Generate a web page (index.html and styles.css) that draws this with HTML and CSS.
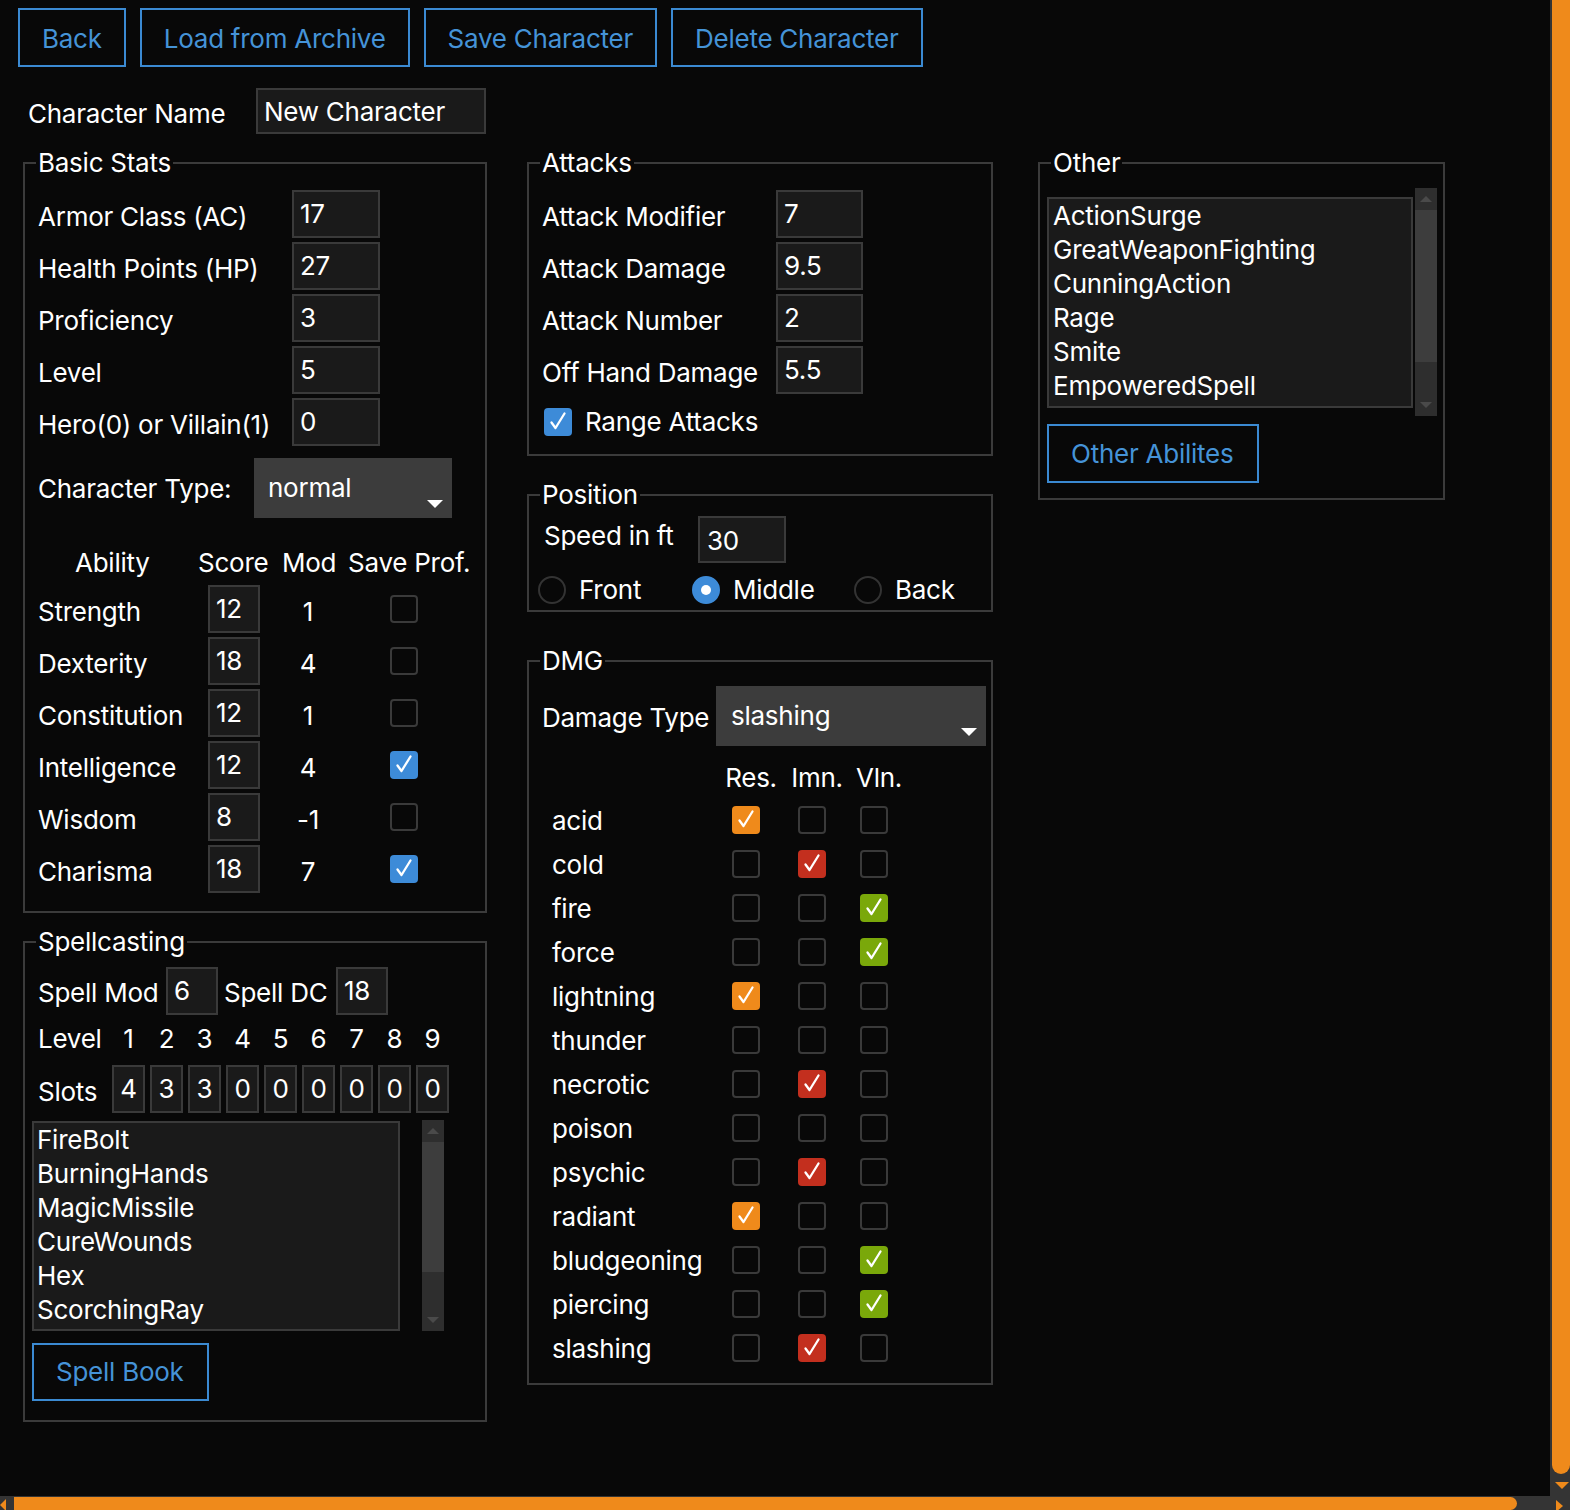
FILE: index.html
```html
<!DOCTYPE html>
<html lang="en">
<head>
<meta charset="utf-8">
<title>Character Editor</title>
<link rel="stylesheet" href="styles.css">
</head>
<body>
<div class="app">
  <main class="content">
    <div class="toolbar">
      <button class="btn">Back</button>
      <button class="btn">Load from Archive</button>
      <button class="btn">Save Character</button>
      <button class="btn">Delete Character</button>
    </div>
    <div class="name-row">
      <span class="name-label">Character Name</span>
      <div class="field name-field">New Character</div>
    </div>
    <div class="columns">
      <div class="col col1">
        <fieldset class="group">
          <legend>Basic Stats</legend>
          <div class="inner basic-inner">
            <div class="stats basic-stats">
              <span class="lbl">Armor Class (AC)</span><div class="field">17</div>
              <span class="lbl">Health Points (HP)</span><div class="field">27</div>
              <span class="lbl">Proficiency</span><div class="field">3</div>
              <span class="lbl">Level</span><div class="field">5</div>
              <span class="lbl">Hero(0) or Villain(1)</span><div class="field">0</div>
            </div>
            <div class="type-row">
              <span class="lbl-type">Character Type:</span>
              <div class="dropdown type-dd">normal<span class="caret"></span></div>
            </div>
            <div class="ability-grid ability-head">
              <span class="h-ability">Ability</span><span class="h-score">Score</span><span class="h-mod">Mod</span><span class="h-save">Save Prof.</span>
            </div>
            <div class="ability-grid ability-rows">
              <span class="lbl">Strength</span><div class="field score">12</div><span class="mod">1</span><span class="cb save"></span>
              <span class="lbl">Dexterity</span><div class="field score">18</div><span class="mod">4</span><span class="cb save"></span>
              <span class="lbl">Constitution</span><div class="field score">12</div><span class="mod">1</span><span class="cb save"></span>
              <span class="lbl">Intelligence</span><div class="field score">12</div><span class="mod">4</span><span class="cb save on blue"><svg viewBox="0 0 28 28"><path d="M7.5 14.5 L11.5 20 L20.5 5.5"/></svg></span>
              <span class="lbl">Wisdom</span><div class="field score">8</div><span class="mod">-1</span><span class="cb save"></span>
              <span class="lbl">Charisma</span><div class="field score">18</div><span class="mod">7</span><span class="cb save on blue"><svg viewBox="0 0 28 28"><path d="M7.5 14.5 L11.5 20 L20.5 5.5"/></svg></span>
            </div>
          </div>
        </fieldset>

        <fieldset class="group spell-group">
          <legend>Spellcasting</legend>
          <div class="inner spell-inner">
            <div class="spell-row">
              <span class="lbl-spell">Spell Mod</span>
              <div class="field small">6</div>
              <span class="lbl-spell dc">Spell DC</span>
              <div class="field small">18</div>
            </div>
            <div class="slot-grid level-row">
              <span>Level</span><span class="num">1</span><span class="num">2</span><span class="num">3</span><span class="num">4</span><span class="num">5</span><span class="num">6</span><span class="num">7</span><span class="num">8</span><span class="num">9</span>
            </div>
            <div class="slot-grid slots-row">
              <span class="slots-lbl">Slots</span>
              <div class="field slot">4</div><div class="field slot">3</div><div class="field slot">3</div><div class="field slot">0</div><div class="field slot">0</div><div class="field slot">0</div><div class="field slot">0</div><div class="field slot">0</div><div class="field slot">0</div>
            </div>
            <div class="list-row spell-list-row">
              <div class="listbox spell-list">
                <div>FireBolt</div>
                <div>BurningHands</div>
                <div>MagicMissile</div>
                <div>CureWounds</div>
                <div>Hex</div>
                <div>ScorchingRay</div>
              </div>
              <div class="lscroll spell-scroll">
                <div class="lcap"><span class="tri-up"></span></div>
                <div class="lthumb"></div>
                <div class="lrest"><span class="tri-dn"></span></div>
              </div>
            </div>
            <button class="btn spell-btn">Spell Book</button>
          </div>
        </fieldset>
      </div>

      <div class="col col2">
        <fieldset class="group">
          <legend>Attacks</legend>
          <div class="inner attack-inner">
            <div class="stats attack-stats">
              <span class="lbl">Attack Modifier</span><div class="field">7</div>
              <span class="lbl">Attack Damage</span><div class="field">9.5</div>
              <span class="lbl">Attack Number</span><div class="field">2</div>
              <span class="lbl">Off Hand Damage</span><div class="field">5.5</div>
              <div class="range-row"><span class="cb on blue"><svg viewBox="0 0 28 28"><path d="M7.5 14.5 L11.5 20 L20.5 5.5"/></svg></span><span>Range Attacks</span></div>
            </div>
          </div>
        </fieldset>

        <fieldset class="group pos-group">
          <legend>Position</legend>
          <div class="inner pos-inner">
            <div class="speed-row">
              <span class="lbl-speed">Speed in ft</span>
              <div class="field speed">30</div>
            </div>
            <div class="radio-row">
              <label class="radio-item front"><span class="radio"></span>Front</label>
              <label class="radio-item middle"><span class="radio sel"></span>Middle</label>
              <label class="radio-item back"><span class="radio"></span>Back</label>
            </div>
          </div>
        </fieldset>

        <fieldset class="group dmg-group">
          <legend>DMG</legend>
          <div class="inner dmg-inner">
            <div class="dtype-row">
              <span class="lbl-dtype">Damage Type</span>
              <div class="dropdown dtype-dd">slashing<span class="caret"></span></div>
            </div>
            <div class="dmg-grid dmg-head">
              <span></span><span class="hcell">Res.</span><span class="hcell">Imn.</span><span class="hcell">Vln.</span>
            </div>
            <div class="dmg-grid dmg-rows">
              <span class="dlbl">acid</span><span class="cb on orange"><svg viewBox="0 0 28 28"><path d="M7.5 14.5 L11.5 20 L20.5 5.5"/></svg></span><span class="cb"></span><span class="cb"></span>
              <span class="dlbl">cold</span><span class="cb"></span><span class="cb on red"><svg viewBox="0 0 28 28"><path d="M7.5 14.5 L11.5 20 L20.5 5.5"/></svg></span><span class="cb"></span>
              <span class="dlbl">fire</span><span class="cb"></span><span class="cb"></span><span class="cb on green"><svg viewBox="0 0 28 28"><path d="M7.5 14.5 L11.5 20 L20.5 5.5"/></svg></span>
              <span class="dlbl">force</span><span class="cb"></span><span class="cb"></span><span class="cb on green"><svg viewBox="0 0 28 28"><path d="M7.5 14.5 L11.5 20 L20.5 5.5"/></svg></span>
              <span class="dlbl">lightning</span><span class="cb on orange"><svg viewBox="0 0 28 28"><path d="M7.5 14.5 L11.5 20 L20.5 5.5"/></svg></span><span class="cb"></span><span class="cb"></span>
              <span class="dlbl">thunder</span><span class="cb"></span><span class="cb"></span><span class="cb"></span>
              <span class="dlbl">necrotic</span><span class="cb"></span><span class="cb on red"><svg viewBox="0 0 28 28"><path d="M7.5 14.5 L11.5 20 L20.5 5.5"/></svg></span><span class="cb"></span>
              <span class="dlbl">poison</span><span class="cb"></span><span class="cb"></span><span class="cb"></span>
              <span class="dlbl">psychic</span><span class="cb"></span><span class="cb on red"><svg viewBox="0 0 28 28"><path d="M7.5 14.5 L11.5 20 L20.5 5.5"/></svg></span><span class="cb"></span>
              <span class="dlbl">radiant</span><span class="cb on orange"><svg viewBox="0 0 28 28"><path d="M7.5 14.5 L11.5 20 L20.5 5.5"/></svg></span><span class="cb"></span><span class="cb"></span>
              <span class="dlbl">bludgeoning</span><span class="cb"></span><span class="cb"></span><span class="cb on green"><svg viewBox="0 0 28 28"><path d="M7.5 14.5 L11.5 20 L20.5 5.5"/></svg></span>
              <span class="dlbl">piercing</span><span class="cb"></span><span class="cb"></span><span class="cb on green"><svg viewBox="0 0 28 28"><path d="M7.5 14.5 L11.5 20 L20.5 5.5"/></svg></span>
              <span class="dlbl">slashing</span><span class="cb"></span><span class="cb on red"><svg viewBox="0 0 28 28"><path d="M7.5 14.5 L11.5 20 L20.5 5.5"/></svg></span><span class="cb"></span>
            </div>
          </div>
        </fieldset>
      </div>

      <div class="col col3">
        <fieldset class="group">
          <legend>Other</legend>
          <div class="inner other-inner">
            <div class="list-row other-list-row">
              <div class="listbox other-list">
                <div>ActionSurge</div>
                <div>GreatWeaponFighting</div>
                <div>CunningAction</div>
                <div>Rage</div>
                <div>Smite</div>
                <div>EmpoweredSpell</div>
              </div>
              <div class="lscroll other-scroll">
                <div class="lcap"><span class="tri-up"></span></div>
                <div class="lthumb"></div>
                <div class="lrest"><span class="tri-dn"></span></div>
              </div>
            </div>
            <button class="btn other-btn">Other Abilites</button>
          </div>
        </fieldset>
      </div>
    </div>
  </main>

  <div class="vscroll">
    <div class="vthumb"></div>
    <span class="vtri-dn"></span>
  </div>
  <div class="hscroll">
    <span class="htri-left"></span>
    <div class="hthumb"></div>
  </div>
  <div class="corner"><span class="ctri"></span></div>
</div>
</body>
</html>
```

FILE: styles.css
```css
* { box-sizing: border-box; }
html, body { margin: 0; padding: 0; }
body {
  background: #080808;
  color: #ffffff;
  font-family: Inter, "Noto Sans", "Liberation Sans", sans-serif;
  font-size: 26px;
  line-height: 30px;
  letter-spacing: -0.25px;
  overflow: hidden;
}
.app {
  display: grid;
  grid-template-columns: 1550px 20px;
  grid-template-rows: 1496px 14px;
  width: 1570px;
  height: 1510px;
}
.content { overflow: hidden; }

/* buttons */
.btn {
  font: inherit;
  letter-spacing: inherit;
  line-height: 30px;
  margin: 0;
  background: transparent;
  color: #4593d7;
  border: 2px solid #3b8ad2;
  border-radius: 0;
  padding: 0 22px;
  height: 59px;
  display: flex;
  align-items: center;
  white-space: nowrap;
}
.toolbar { display: flex; gap: 14px; padding: 8px 0 0 18px; }
.toolbar .btn { padding-top: 2px; }

/* inputs */
.field {
  height: 48px;
  background: #1a1a1a;
  border: 2px solid #3a3a3a;
  padding-left: 6px;
  display: flex;
  align-items: center;
  white-space: nowrap;
}
.name-row { display: flex; align-items: center; margin-top: 21px; padding-left: 28px; }
.name-label { width: 228px; padding-top: 6px; }
.name-field { width: 230px; height: 46px; padding-top: 1px; }

.columns { display: flex; align-items: flex-start; margin-top: 14px; }
.col { display: flex; flex-direction: column; }
.col1 { width: 464px; margin-left: 23px; }
.col2 { width: 466px; margin-left: 40px; }
.col3 { width: 407px; margin-left: 45px; }

fieldset.group {
  border: 2px solid #3b3b3b;
  margin: 0;
  padding: 0;
  min-width: 0;
}
legend {
  margin-left: 11px;
  padding: 0 2px;
  line-height: 30px;
  font-size: 26px;
}
.inner { padding-left: 13px; }

/* label/value grids */
.stats { display: grid; grid-auto-rows: 48px; row-gap: 4px; align-items: center; }
.basic-stats { grid-template-columns: 254px 88px; }
.attack-stats { grid-template-columns: 234px 87px; }
.lbl { padding-top: 6px; white-space: nowrap; }

.basic-inner { padding-top: 12px; padding-bottom: 18px; }
.type-row { display: grid; grid-template-columns: 216px 198px; align-items: center; margin-top: 12px; height: 60px; }
.lbl-type { padding-top: 2px; }
.dropdown {
  position: relative;
  height: 60px;
  background: #3c3c3c;
  display: flex;
  align-items: center;
  padding-left: 14px;
}
.caret {
  position: absolute;
  right: 9px;
  bottom: 10px;
  width: 0; height: 0;
  border-left: 8px solid transparent;
  border-right: 8px solid transparent;
  border-top: 8px solid #ffffff;
}

.ability-grid { display: grid; grid-template-columns: 160px 76px 68px 1fr; align-items: center; }
.ability-head { margin-top: 30px; height: 30px; white-space: nowrap; }
.h-ability { padding-left: 37px; }
.h-mod { padding-left: 8px; }
.h-save { padding-left: 6px; }
.ability-rows { margin-top: 7px; grid-auto-rows: 48px; row-gap: 4px; }
.field.score { width: 52px; margin-left: 10px; }
.mod { justify-self: center; padding-top: 6px; }
.cb.save { margin-left: 48px; }

/* checkboxes */
.cb {
  width: 28px;
  height: 28px;
  border: 2px solid #3a3a3a;
  border-radius: 4px;
  display: inline-flex;
  align-items: center;
  justify-content: center;
  flex: none;
}
.cb svg { width: 28px; height: 28px; flex: none; margin: -2px; }
.cb svg path { fill: none; stroke: #ffffff; stroke-width: 2.3; stroke-linejoin: round; stroke-linecap: round; }
.cb.on { border: none; }
.cb.on svg { margin: 0; }
.cb.blue { background: #3d8bd8; }
.cb.orange { background: #ef8a1b; }
.cb.red { background: #c32f1e; }
.cb.green { background: #7aa80a; }

/* spellcasting */
fieldset.spell-group { margin-top: 14px; }
.spell-inner { padding-top: 10px; padding-bottom: 19px; }
.spell-row { display: flex; align-items: center; height: 48px; }
.lbl-spell { width: 128px; padding-top: 4px; white-space: nowrap; }
.lbl-spell.dc { width: 112px; margin-left: 6px; }
.field.small { width: 52px; }
.slot-grid { display: grid; grid-template-columns: 69px repeat(9, 33px); column-gap: 5px; align-items: center; }
.level-row { margin-top: 9px; height: 30px; }
.num { text-align: center; }
.slots-row { margin-top: 11px; height: 48px; }
.slots-lbl { padding-top: 6px; }
.field.slot { width: 33px; padding: 0; justify-content: center; }

.list-row { display: flex; align-items: center; }
.listbox {
  background: #1a1a1a;
  border: 2px solid #3a3a3a;
  line-height: 34px;
  white-space: nowrap;
  overflow: hidden;
}
.spell-list-row { margin-top: 7px; margin-left: -6px; }
.spell-list { width: 368px; height: 210px; padding-left: 3px; }
.spell-scroll { margin-left: 22px; height: 211px; }
.spell-scroll .lthumb { height: 130px; }
.spell-btn { margin-top: 12px; margin-left: -6px; height: 58px; width: 177px; }

.lscroll { width: 22px; background: #2e2e2e; display: flex; flex-direction: column; }
.lcap { height: 22px; display: flex; align-items: center; justify-content: center; }
.lthumb { background: #3d3d3d; }
.lrest { flex: 1; display: flex; align-items: flex-end; justify-content: center; padding-bottom: 8px; }
.tri-up { width: 0; height: 0; border-left: 6px solid transparent; border-right: 6px solid transparent; border-bottom: 6px solid #4a4a4a; }
.tri-dn { width: 0; height: 0; border-left: 6px solid transparent; border-right: 6px solid transparent; border-top: 6px solid #4a4a4a; }

/* attacks */
.attack-inner { padding-top: 12px; padding-bottom: 8px; }
.range-row { grid-column: 1 / span 2; display: flex; align-items: center; gap: 13px; margin-left: 2px; }

/* position */
fieldset.pos-group { margin-top: 24px; }
.pos-inner { padding-top: 6px; padding-bottom: 6px; }
.speed-row { display: flex; align-items: center; margin-left: 2px; height: 47px; }
.lbl-speed { width: 154px; padding-bottom: 7px; }
.field.speed { width: 88px; height: 47px; padding-left: 7px; padding-top: 2px; }
.radio-row { display: flex; align-items: center; margin-top: 13px; height: 28px; margin-left: -4px; }
.radio-item { display: flex; align-items: center; gap: 13px; }
.radio-item.front { width: 154px; }
.radio-item.middle { width: 162px; }
.radio {
  width: 28px; height: 28px;
  border-radius: 50%;
  border: 2px solid #333333;
  display: flex; align-items: center; justify-content: center;
}
.radio.sel { background: #3d8bd8; border-color: #3d8bd8; }
.radio.sel::after { content: ""; width: 10px; height: 10px; border-radius: 50%; background: #ffffff; }

/* dmg */
fieldset.dmg-group { margin-top: 34px; }
.dmg-inner { padding-top: 10px; padding-bottom: 13px; }
.dtype-row { display: flex; align-items: center; height: 60px; }
.lbl-dtype { width: 174px; padding-top: 4px; white-space: nowrap; }
.dtype-dd { width: 270px; padding-left: 15px; }
.dmg-grid { display: grid; grid-template-columns: 190px 28px 38px 28px 34px 28px; align-items: center; }
.dmg-head { margin-top: 17px; height: 30px; }
.dmg-head .hcell { display: flex; justify-content: center; padding-left: 10px; white-space: nowrap; }
.dmg-head span:nth-child(3) { grid-column: 4; }
.dmg-head span:nth-child(4) { grid-column: 6; }
.dmg-rows { margin-top: 5px; grid-auto-rows: 44px; }
.dmg-rows .cb:nth-child(4n+2) { grid-column: 2; }
.dmg-rows .cb:nth-child(4n+3) { grid-column: 4; }
.dmg-rows .cb:nth-child(4n+4) { grid-column: 6; }
.dmg-rows .dlbl { grid-column: 1; padding-left: 10px; padding-top: 2px; }

/* other */
.other-inner { padding-top: 10px; padding-left: 7px; padding-bottom: 15px; }
.other-list { width: 366px; height: 211px; padding-left: 4px; }
.other-scroll { margin-left: 2px; height: 228px; }
.other-scroll .lthumb { height: 152px; }
.other-btn { margin-top: 8px; width: 212px; }

/* window scrollbars */
.vscroll { background: #343434; position: relative; }
.vthumb { position: absolute; left: 2px; right: 0; top: 0; height: 1474px; background: #ef8a1b; border-radius: 0 0 9px 9px; }
.vtri-dn { position: absolute; left: 5px; top: 1482px; width: 0; height: 0; border-left: 7px solid transparent; border-right: 7px solid transparent; border-top: 7px solid #ef8a1b; }
.hscroll { background: #343434; position: relative; }
.hthumb { position: absolute; left: 14px; top: 1px; bottom: 0; width: 1503px; background: #ef8a1b; border-radius: 0 9px 9px 0; }
.htri-left { position: absolute; left: 0; top: 3px; width: 0; height: 0; border-top: 6px solid transparent; border-bottom: 6px solid transparent; border-right: 6px solid #ef8a1b; }
.corner { background: #343434; position: relative; }
.ctri { position: absolute; left: 6px; top: 4px; width: 0; height: 0; border-top: 6px solid transparent; border-bottom: 6px solid transparent; border-left: 7px solid #ef8a1b; }
```
